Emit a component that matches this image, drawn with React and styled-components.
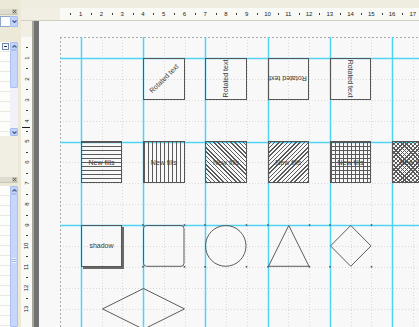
import React from "react";
import styled, { createGlobalStyle } from "styled-components";

const U = 20.75; // horizontal ruler unit (px)
const V = 20.9; // vertical ruler unit (px)
const COLS = 18;
const ROWS = 15;

const Global = createGlobalStyle`
  html, body { margin: 0; padding: 0; background: #ece9d8; overflow: hidden; }
  body { font-family: "Liberation Sans", Arial, sans-serif; }
`;

const Root = styled.div`
  display: flex;
  width: 419px;
  height: 327px;
  overflow: hidden;
  background: #ece9d8;
`;

/* ---------- left tool panel ---------- */
const SidePanel = styled.div`
  width: 18px;
  flex: none;
  display: flex;
  flex-direction: column;
  padding-top: 9px;
  box-sizing: border-box;
`;

const Caption = styled.div`
  flex: none;
  height: 5px;
  display: flex;
  justify-content: flex-end;
  align-items: center;
  background: #dedbcf;
  border-bottom: 1px solid #cac6b6;
`;

const CloseBox = styled.div`
  width: 5px;
  height: 5px;
  margin-right: 1px;
  background: #c6c2b3;
  display: flex;
  align-items: center;
  justify-content: center;
`;

const Combo = styled.div`
  flex: none;
  height: 11px;
  margin-top: 1px;
  display: flex;
`;

const ComboField = styled.div`
  flex: 1;
  background: #fbfcfe;
  border: 1px solid #8ea6c9;
  border-right: none;
`;

const ScrollBtn = styled.div`
  width: 8px;
  height: ${(p) => p.$h || 8}px;
  flex: none;
  box-sizing: border-box;
  background: #c3d4fc;
  border: 1px solid #a9bdec;
  border-radius: 1px;
  display: flex;
  align-items: center;
  justify-content: center;
`;

const Spacer = styled.div`
  flex: none;
  height: ${(p) => p.$h}px;
  background: ${(p) => (p.$tex ? "#f1efe3" : "transparent")};
`;

const List = styled.div`
  display: flex;
  flex: ${(p) => (p.$h ? "none" : "1")};
  height: ${(p) => (p.$h ? `${p.$h}px` : "auto")};
  min-height: 0;
`;

const ListBody = styled.div`
  flex: 1;
  background-color: #fdfdfb;
  background-image: repeating-linear-gradient(
    to bottom,
    transparent 0 9px,
    #ebe8dc 9px 10px
  );
  padding: 1px 0 0 2px;
`;

const MinusBox = styled.div`
  width: 7px;
  height: 7px;
  box-sizing: border-box;
  border: 1px solid #6f86ad;
  background: #f3f5fa;
  display: flex;
  align-items: center;
  justify-content: center;
  &::after {
    content: "";
    width: 3px;
    height: 1px;
    background: #2a3c5c;
  }
`;

const ScrollBar = styled.div`
  width: 8px;
  flex: none;
  display: flex;
  flex-direction: column;
  background: #eef1f8;
`;

const Thumb = styled.div`
  flex: ${(p) => (p.$h ? "none" : "1")};
  height: ${(p) => (p.$h ? `${p.$h}px` : "auto")};
  box-sizing: border-box;
  background: #c6d6fc;
  border: 1px solid #adc1f0;
  border-radius: 1px;
  display: flex;
  align-items: center;
  justify-content: center;
`;

const Grip = styled.div`
  width: 4px;
  height: 5px;
  background: repeating-linear-gradient(
    to bottom,
    #eef3ff 0 1px,
    #9db3e6 1px 2px
  );
`;

const Track = styled.div`
  flex: 1;
  background: #f1f2f7;
`;

const Splitter = styled.div`
  width: 3px;
  flex: none;
  background: #ece9d8;
`;

/* ---------- designer ---------- */
const Designer = styled.div`
  flex: 1;
  display: flex;
  flex-direction: column;
  min-width: 0;
`;

const TopStrip = styled.div`
  height: 8px;
  flex: none;
  background: #efeddf;
`;

const HRuler = styled.div`
  flex: none;
  height: 12px;
  display: flex;
  border-bottom: 1px solid #d3d0c2;
`;

const RulerLead = styled.div`
  flex: none;
  width: ${(p) => p.$w || 0}px;
  height: ${(p) => p.$h || 0}px;
  background: #f1efe4;
`;

const HScale = styled.div`
  flex: 1;
  display: flex;
  padding-left: ${U / 2}px;
  background: #f9f9f6;
  overflow: hidden;
`;

const HCell = styled.div`
  flex: none;
  width: ${U}px;
  display: grid;
  grid-template-columns: 1px 1fr 1px;
  align-items: center;
  justify-items: center;
`;

const Tick = styled.span`
  display: block;
  width: ${(p) => (p.$v ? "2px" : "1px")};
  height: ${(p) => (p.$v ? "1px" : "2px")};
  background: #3a3a3a;
`;

const RulerNum = styled.span`
  font-size: 6px;
  line-height: 6px;
  color: #222;
  white-space: nowrap;
  transform: ${(p) => (p.$v ? "rotate(-90deg)" : "none")};
`;

const Workspace = styled.div`
  flex: 1;
  display: flex;
  min-height: 0;
`;

const VRuler = styled.div`
  flex: none;
  width: 11px;
  display: flex;
  flex-direction: column;
  position: relative;
`;

const VScale = styled.div`
  flex: 1;
  display: flex;
  flex-direction: column;
  padding-top: ${V / 2}px;
  background: #f9f9f6;
  overflow: hidden;
`;

const VCell = styled.div`
  flex: none;
  height: ${V}px;
  display: grid;
  grid-template-rows: 1px 1fr 1px;
  align-items: center;
  justify-items: center;
`;

const CursorMark = styled.div`
  position: absolute;
  left: 1px;
  right: 2px;
  top: 106px;
  height: 1px;
  background: #1e1e1e;
`;

const PageEdge = styled.div`
  flex: none;
  width: 7px;
  box-sizing: border-box;
  background: #737373;
  border-left: 2px solid #a9a69a;
`;

const Page = styled.div`
  flex: 1;
  background: #f8f8f8;
  overflow: hidden;
  padding: 16px 0 0 21px;
  min-width: 0;
`;

const Sheet = styled.div`
  display: grid;
  grid-template-columns: repeat(${COLS}, ${U}px);
  grid-template-rows: repeat(${ROWS}, ${V}px);
`;

const Backdrop = styled.svg`
  grid-column: 1 / -1;
  grid-row: 1 / -1;
  width: ${COLS * U}px;
  height: ${ROWS * V}px;
  display: block;
`;

const Node = styled.div`
  grid-column: ${(p) => p.$c + 1} / span ${(p) => p.$w || 2};
  grid-row: ${(p) => p.$r + 1} / span ${(p) => p.$h || 2};
  position: relative;
  display: flex;
  align-items: center;
  justify-content: center;
  box-sizing: border-box;
  font-family: "Liberation Sans", Arial, sans-serif;
  font-size: 7px;
  color: #3a3a3a;
  white-space: nowrap;
`;

const Box = styled(Node)`
  border: 1px solid #565656;
  box-shadow: ${(p) => (p.$shadow ? "2px 2px 0 #6a6a6a" : "none")};
  background-image: ${(p) => p.$fill || "none"};
`;

const Label = styled.span`
  display: block;
  transform: rotate(${(p) => p.$deg || 0}deg);
`;

const ShapeSvg = styled.svg`
  width: 100%;
  height: 100%;
  display: block;
  overflow: visible;
`;

const L = "#5a5a5a";
const FILLS = {
  horiz: `repeating-linear-gradient(to bottom, ${L} 0 1px, transparent 1px 4px)`,
  vert: `repeating-linear-gradient(to right, ${L} 0 1px, transparent 1px 4px)`,
  back: `repeating-linear-gradient(45deg, ${L} 0 1px, transparent 1px 3px)`,
  fwd: `repeating-linear-gradient(-45deg, ${L} 0 1px, transparent 1px 3px)`,
  cross: `repeating-linear-gradient(to bottom, ${L} 0 1px, transparent 1px 4px), repeating-linear-gradient(to right, ${L} 0 1px, transparent 1px 4px)`,
  xcross: `repeating-linear-gradient(45deg, ${L} 0 1px, transparent 1px 3px), repeating-linear-gradient(-45deg, ${L} 0 1px, transparent 1px 3px)`,
};

const W2 = 2 * U;
const H2 = 2 * V;

function Corners() {
  const pts = [
    [0, 0],
    [W2, 0],
    [0, H2],
    [W2, H2],
  ];
  return pts.map(([x, y], i) => (
    <rect key={i} x={x - 0.75} y={y - 0.75} width="1.5" height="1.5" fill="#4a4a4a" />
  ));
}

function Chevron({ up }) {
  return (
    <svg width="5" height="3" viewBox="0 0 5 3">
      <polyline
        points={up ? "0.5,2.5 2.5,0.5 4.5,2.5" : "0.5,0.5 2.5,2.5 4.5,0.5"}
        fill="none"
        stroke="#4a5e86"
        strokeWidth="1.2"
      />
    </svg>
  );
}

function XMark() {
  return (
    <svg width="3" height="3" viewBox="0 0 3 3">
      <path d="M0 0L3 3M3 0L0 3" stroke="#555" strokeWidth="0.8" />
    </svg>
  );
}

function GridBackdrop() {
  const w = COLS * U;
  const h = ROWS * V;
  const vLines = [];
  for (let k = 1; k < COLS; k++) vLines.push(k);
  const hLines = [];
  for (let k = 1; k < ROWS; k++) hLines.push(k);
  const guideX = [1, 4, 7, 10, 13, 16];
  const guideY = [1, 5, 9];
  const px = (v) => Math.round(v) + 0.5;
  return (
    <Backdrop viewBox={`0 0 ${w} ${h}`}>
      {vLines.map((k) => (
        <line
          key={"v" + k}
          x1={px(k * U)}
          y1="0"
          x2={px(k * U)}
          y2={h}
          stroke="#d9d9d9"
          strokeWidth="1"
          strokeDasharray="1 2"
        />
      ))}
      {hLines.map((k) => (
        <line
          key={"h" + k}
          x1="0"
          y1={px(k * V)}
          x2={w}
          y2={px(k * V)}
          stroke="#d9d9d9"
          strokeWidth="1"
          strokeDasharray="1 2"
        />
      ))}
      <line x1="0.5" y1="0" x2="0.5" y2={h} stroke="#a9a9a9" strokeDasharray="2 2" />
      <line x1="0" y1="0.5" x2={w} y2="0.5" stroke="#a9a9a9" strokeDasharray="2 2" />
      {guideX.map((k) => (
        <line key={"gx" + k} x1={px(k * U)} y1="0" x2={px(k * U)} y2={h} stroke="#4fd4f4" strokeWidth="1.5" />
      ))}
      {guideY.map((k) => (
        <line key={"gy" + k} x1="0" y1={px(k * V)} x2={w} y2={px(k * V)} stroke="#4fd4f4" strokeWidth="1.5" />
      ))}
    </Backdrop>
  );
}

const rotated = [
  { c: 4, deg: -45 },
  { c: 7, deg: -90 },
  { c: 10, deg: 180 },
  { c: 13, deg: 90 },
];

const fills = [
  { c: 1, f: "horiz" },
  { c: 4, f: "vert" },
  { c: 7, f: "back" },
  { c: 10, f: "fwd" },
  { c: 13, f: "cross" },
  { c: 16, f: "xcross" },
];

export default function App() {
  const hNums = Array.from({ length: 17 }, (_, i) => i + 1);
  const vNums = Array.from({ length: 13 }, (_, i) => i + 1);
  return (
    <>
      <Global />
      <Root>
        <SidePanel>
          <Caption>
            <CloseBox>
              <XMark />
            </CloseBox>
          </Caption>
          <Combo>
            <ComboField />
            <ScrollBtn $h={11}>
              <Chevron />
            </ScrollBtn>
          </Combo>
          <Spacer $h={15} />
          <List $h={94}>
            <ListBody>
              <MinusBox />
            </ListBody>
            <ScrollBar>
              <ScrollBtn>
                <Chevron up />
              </ScrollBtn>
              <Thumb $h={38} />
              <Track />
              <ScrollBtn>
                <Chevron />
              </ScrollBtn>
            </ScrollBar>
          </List>
          <Spacer $h={41} $tex />
          <Caption>
            <CloseBox>
              <XMark />
            </CloseBox>
          </Caption>
          <Spacer $h={3} />
          <List>
            <ListBody />
            <ScrollBar>
              <ScrollBtn>
                <Chevron up />
              </ScrollBtn>
              <Thumb>
                <Grip />
              </Thumb>
            </ScrollBar>
          </List>
        </SidePanel>
        <Splitter />
        <Designer>
          <TopStrip />
          <HRuler>
            <RulerLead $w={39} $h={12} />
            <HScale>
              {hNums.map((n) => (
                <HCell key={n}>
                  <Tick />
                  <RulerNum>{n}</RulerNum>
                </HCell>
              ))}
            </HScale>
          </HRuler>
          <Workspace>
            <VRuler>
              <RulerLead $w={11} $h={16} />
              <VScale>
                {vNums.map((n) => (
                  <VCell key={n}>
                    <Tick $v />
                    <RulerNum $v>{n}</RulerNum>
                  </VCell>
                ))}
              </VScale>
              <CursorMark />
            </VRuler>
            <PageEdge />
            <Page>
              <Sheet>
                <GridBackdrop />
                {rotated.map((b) => (
                  <Box key={"r" + b.c} $c={b.c} $r={1}>
                    <Label $deg={b.deg}>Rotated text</Label>
                  </Box>
                ))}
                {fills.map((b) => (
                  <Box key={"f" + b.c} $c={b.c} $r={5} $fill={FILLS[b.f]}>
                    <Label>New fills</Label>
                  </Box>
                ))}
                <Box $c={1} $r={9} $shadow>
                  <Label>shadow</Label>
                </Box>
                <Node $c={4} $r={9}>
                  <ShapeSvg viewBox={`0 0 ${W2} ${H2}`}>
                    <rect x="0.5" y="0.5" width={W2 - 1} height={H2 - 1} rx="3" fill="none" stroke="#5a5a5a" />
                    <Corners />
                  </ShapeSvg>
                </Node>
                <Node $c={7} $r={9}>
                  <ShapeSvg viewBox={`0 0 ${W2} ${H2}`}>
                    <ellipse cx={W2 / 2} cy={H2 / 2} rx={W2 / 2 - 0.5} ry={H2 / 2 - 0.5} fill="none" stroke="#5a5a5a" />
                    <Corners />
                  </ShapeSvg>
                </Node>
                <Node $c={10} $r={9}>
                  <ShapeSvg viewBox={`0 0 ${W2} ${H2}`}>
                    <polygon
                      points={`${W2 / 2},0.5 ${W2 - 0.5},${H2 - 0.5} 0.5,${H2 - 0.5}`}
                      fill="none"
                      stroke="#5a5a5a"
                    />
                    <Corners />
                  </ShapeSvg>
                </Node>
                <Node $c={13} $r={9}>
                  <ShapeSvg viewBox={`0 0 ${W2} ${H2}`}>
                    <polygon
                      points={`${W2 / 2},0.5 ${W2 - 0.5},${H2 / 2} ${W2 / 2},${H2 - 0.5} 0.5,${H2 / 2}`}
                      fill="none"
                      stroke="#5a5a5a"
                    />
                    <Corners />
                  </ShapeSvg>
                </Node>
                <Node $c={2} $r={12} $w={4} $h={2}>
                  <ShapeSvg viewBox={`0 0 ${4 * U} ${H2}`}>
                    <polygon
                      points={`${2 * U},0.5 ${4 * U - 0.5},${V} ${2 * U},${H2 - 0.5} 0.5,${V}`}
                      fill="none"
                      stroke="#5a5a5a"
                    />
                  </ShapeSvg>
                </Node>
              </Sheet>
            </Page>
          </Workspace>
        </Designer>
      </Root>
    </>
  );
}
